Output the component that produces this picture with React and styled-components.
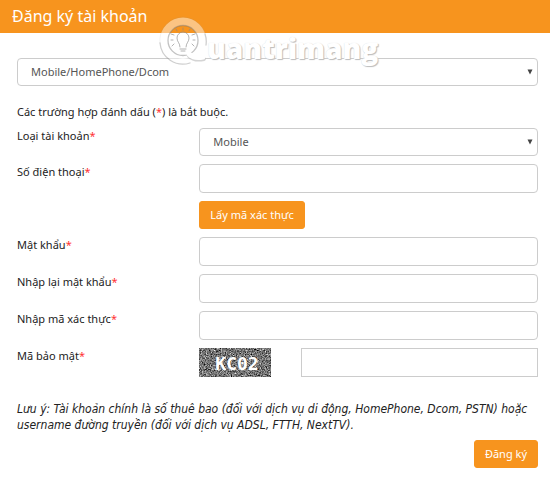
import React, { useState } from 'react';
import styled, { createGlobalStyle } from 'styled-components';

const ORANGE = '#f7941e';

const GlobalStyle = createGlobalStyle`
    * {
        box-sizing: border-box;
    }
    body {
        margin: 0;
        background: #fff;
        color: #222;
        font-family: "Noto Sans", "Open Sans", sans-serif;
        font-size: 11px;
        line-height: 16px;
    }
    input, select, button {
        font: inherit;
    }
`;

const fields = [
    { id: 'password', label: 'Mật khẩu', type: 'password' },
    { id: 'confirm', label: 'Nhập lại mật khẩu', type: 'password' },
    { id: 'otp', label: 'Nhập mã xác thực', type: 'text' },
];

const Dropdown = ({ id, options, label }) => (
    <SelectBox>
        <Select id={id} aria-label={label}>
            {options.map((option) => (
                <option key={option}>{option}</option>
            ))}
        </Select>
        <Arrow viewBox="0 0 6 6" aria-hidden="true">
            <path d="M0.5 0.5H5.5L3 5.5Z" fill="#444" />
        </Arrow>
    </SelectBox>
);

const Field = ({ id, label, children }) => (
    <Row>
        <Label htmlFor={id}>
            {label}
            <Star>*</Star>
        </Label>
        {children}
    </Row>
);

const Logo = () => (
    <Watermark aria-hidden="true">
        <Mark viewBox="0 0 48 50">
            <g fill="none" strokeLinecap="round">
                <path d="M9 28A15 15 0 0 0 39 28Z" fill="#fff" fillOpacity="0.7" />
                <circle cx="24" cy="24.5" r="19" stroke="#fff" strokeOpacity="0.45" strokeWidth="8" />
                <path d="M1 27A23 23 0 0 0 31 47M47 29A23 23 0 0 0 46 18" stroke="#888" strokeOpacity="0.4" strokeWidth="1.3" />
                <path d="M1 27A23 23 0 0 1 46 18" stroke="#888" strokeOpacity="0.1" />
                <circle cx="24" cy="24.5" r="15" stroke="#777" strokeOpacity="0.45" strokeWidth="1.3" />
                <path d="M30 40Q35 45 45 43" stroke="#aaa" strokeOpacity="0.5" strokeWidth="4" />
                <path d="M30 38Q35 43 44 41" stroke="#fff" strokeWidth="5" />
                <g stroke="#888" strokeOpacity="0.65">
                    <path d="M21 31C21 27 18 26 18 22A6 6 0 0 1 30 22C30 26 27 27 27 31" fill="#fff" fillOpacity="0.3" />
                    <path d="M21 33H27M22 35H26M24 12V14M17 13L18 15M31 13L30 15M12 18L15 19M36 18L33 19M12 24H14M34 24H36M13 30L15 28M35 30L33 28" />
                </g>
            </g>
        </Mark>
        <Brand>uantrimang</Brand>
    </Watermark>
);

const Captcha = () => (
    <CaptchaImage viewBox="0 0 72 29" role="img" aria-label="KC02">
        <filter id="noise" x="0" y="0" width="100%" height="100%" colorInterpolationFilters="sRGB">
            <feTurbulence type="fractalNoise" baseFrequency="0.8" numOctaves="3" seed="4" />
            <feColorMatrix values="0.9 0.9 0 0 -0.45  0.9 0.9 0 0 -0.45  0.9 0.9 0 0 -0.45  0 0 0 0 1" />
        </filter>
        <rect width="72" height="29" filter="url(#noise)" />
        <CaptchaText x="38" y="22" textAnchor="middle">KC02</CaptchaText>
    </CaptchaImage>
);

const App = () => {
    const [values, setValues] = useState({});
    const bind = (id) => ({
        id,
        value: values[id] || '',
        onChange: (e) => setValues({ ...values, [id]: e.target.value }),
    });

    return (
        <Page>
            <GlobalStyle />
            <Header>
                <h1>Đăng ký tài khoản</h1>
                <Logo />
            </Header>
            <Form onSubmit={(e) => e.preventDefault()}>
                <Dropdown id="service" label="Dịch vụ" options={['Mobile/HomePhone/Dcom', 'ADSL/FTTH/NextTV']} />
                <Hint>
                    Các trường hợp đánh dấu (<Star>*</Star>) là bắt buộc.
                </Hint>
                <Rows>
                    <Field id="type" label="Loại tài khoản">
                        <Dropdown id="type" options={['Mobile', 'HomePhone', 'Dcom']} />
                    </Field>
                    <Field id="phone" label="Số điện thoại">
                        <Input type="tel" {...bind('phone')} />
                    </Field>
                    <Row>
                        <span />
                        <div>
                            <Button type="button">Lấy mã xác thực</Button>
                        </div>
                    </Row>
                    {fields.map(({ id, label, type }) => (
                        <Field key={id} id={id} label={label}>
                            <Input type={type} {...bind(id)} />
                        </Field>
                    ))}
                    <Field id="captcha" label="Mã bảo mật">
                        <CaptchaRow>
                            <Captcha />
                            <Input $square type="text" {...bind('captcha')} />
                        </CaptchaRow>
                    </Field>
                </Rows>
                <Note>
                    Lưu ý: Tài khoản chính là số thuê bao (đối với dịch vụ di động, HomePhone, Dcom, PSTN) hoặc
                    username đường truyền (đối với dịch vụ ADSL, FTTH, NextTV).
                </Note>
                <Actions>
                    <Button type="submit">Đăng ký</Button>
                </Actions>
            </Form>
        </Page>
    );
};

const Page = styled.main`
    width: 100%;
`;

const Header = styled.header`
    position: relative;
    background: ${ORANGE};
    padding: 4px 12px 5px;
    h1 {
        margin: 0;
        color: #fff;
        font-size: 16px;
        font-weight: 400;
        line-height: 24px;
    }
`;

/* brand stamp lying over the header and the first drop-down */
const Watermark = styled.div`
    position: absolute;
    z-index: 2;
    top: 16px;
    left: 159px;
    display: flex;
    pointer-events: none;
`;

const Mark = styled.svg`
    width: 48px;
    height: 50px;
`;

const Brand = styled.span`
    padding-top: 12px;
    color: #fff;
    font-family: "Open Sans", sans-serif;
    font-size: 28px;
    font-weight: 800;
    line-height: 40px;
    text-shadow: 1px 1px 1px #bbb, 0 0 1px #ddd;
`;

const Form = styled.form`
    padding: 25px 12px 9px 17px;
`;

const Hint = styled.p`
    margin: 18px 0 8px;
`;

const Rows = styled.div`
    display: flex;
    flex-direction: column;
    gap: 8px;
`;

const Row = styled.div`
    display: grid;
    grid-template-columns: 35% 1fr;
    align-items: start;
`;

const Label = styled.label`
    color: #222;
`;

const Star = styled.span`
    color: #f33;
`;

const SelectBox = styled.div`
    position: relative;
`;

const Select = styled.select`
    display: block;
    width: 100%;
    height: 28px;
    padding: 0 24px 0 13px;
    appearance: none;
    background: #fff;
    border: 1px solid #ccc;
    border-radius: 4px;
    color: #555;
`;

const Arrow = styled.svg`
    position: absolute;
    top: 11px;
    right: 5px;
    width: 6px;
    height: 6px;
    pointer-events: none;
`;

const Input = styled.input`
    display: block;
    width: 100%;
    height: 29px;
    padding: 0 12px;
    background: #fff;
    border: 1px solid #ccc;
    border-radius: ${({ $square }) => ($square ? '0' : '4px')};
    color: #555;
`;

const Button = styled.button`
    display: block;
    height: 28px;
    padding: 0 10px;
    background: ${ORANGE};
    border: 1px solid ${ORANGE};
    border-radius: 3px;
    color: #fff;
    cursor: pointer;
`;

const CaptchaRow = styled.div`
    display: flex;
    justify-content: space-between;
    ${Input} {
        width: 70%;
    }
`;

const CaptchaImage = styled.svg`
    width: 72px;
    height: 29px;
`;

const CaptchaText = styled.text`
    fill: #fff;
    font-family: "DejaVu Sans Mono", monospace;
    font-size: 18px;
    font-weight: 700;
`;

const Note = styled.p`
    margin: 24px 0 7px;
    font-family: "DejaVu Sans Condensed", "Noto Sans", sans-serif;
    font-size: 12px;
    font-style: italic;
`;

const Actions = styled.div`
    display: flex;
    justify-content: flex-end;
`;

export default App;
